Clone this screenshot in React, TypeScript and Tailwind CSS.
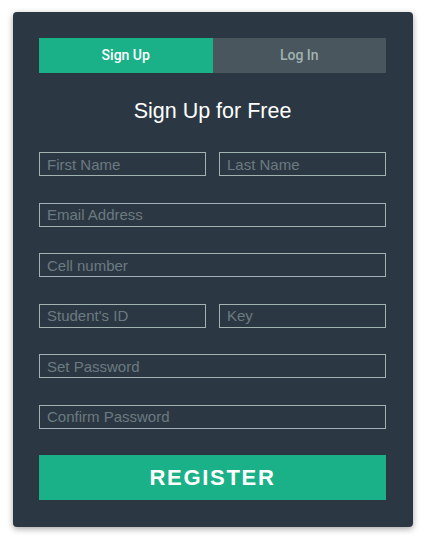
import React from "react";

const inputCls =
  "h-[24px] w-full min-w-0 border border-[#a0b3b0] bg-transparent pl-[7px] text-[15px] text-white placeholder:text-[#6b7a81] outline-none";

export default function App() {
  return (
    <div className="w-[428px] h-[543px] bg-white" style={{ fontFamily: "'Liberation Sans', Arial, sans-serif" }}>
      <div className="pt-[12px] pl-[13px]">
        <div className="w-[400px] rounded-[4px] bg-[#2b3843] pl-[26px] pr-[27px] pt-[26px] pb-[27px] shadow-[0_2px_6px_rgba(0,0,0,0.35)]">
          <div className="flex h-[35px]">
            <div className="flex-1 flex items-center justify-center bg-[#1ab188] text-white text-[14px] font-medium" style={{ fontFamily: "Roboto, sans-serif" }}>
              Sign Up
            </div>
            <div className="flex-1 flex items-center justify-center bg-[#4a565d] text-[#a0b3b0] text-[14px] font-medium" style={{ fontFamily: "Roboto, sans-serif" }}>
              Log In
            </div>
          </div>
          <h1 className="mt-[24px] text-center text-[21.5px] leading-[28px] text-white">Sign Up for Free</h1>
          <div className="mt-[27px] flex flex-col gap-[26.6px]">
            <div className="flex gap-[13px]">
              <input className={inputCls} placeholder="First Name" />
              <input className={inputCls} placeholder="Last Name" />
            </div>
            <input className={inputCls} placeholder="Email Address" />
            <input className={inputCls} placeholder="Cell number" />
            <div className="flex gap-[13px]">
              <input className={inputCls} placeholder="Student's ID" />
              <input className={inputCls} placeholder="Key" />
            </div>
            <input className={inputCls} placeholder="Set Password" />
            <input className={inputCls} placeholder="Confirm Password" />
          </div>
          <button className="mt-[26px] h-[45px] w-full bg-[#1ab188] text-white text-[22px] font-bold tracking-[1.7px]">
            REGISTER
          </button>
        </div>
      </div>
    </div>
  );
}
